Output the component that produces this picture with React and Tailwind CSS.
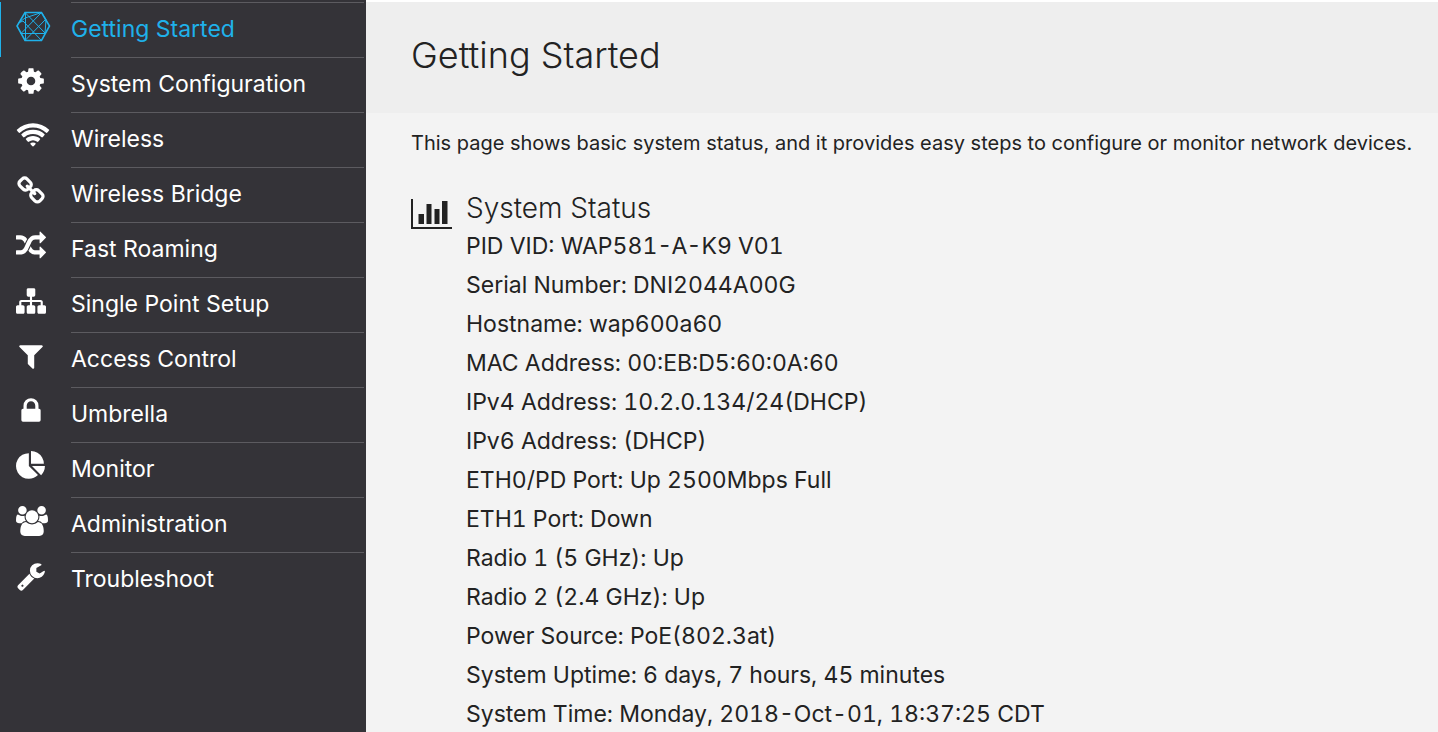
import React from 'react';

// Glyphs share a 1792 unit high grid, most of them are square
const icons = {
  cog: {
    d: 'M1152 896q0-106-75-181t-181-75-181 75-75 181 75 181 181 75 181-75 75-181zm512-109v222q0 12-8 23t-20 13l-185 28q-19 54-39 91 35 50 107 138 10 12 10 25t-9 23q-27 37-99 108t-94 71q-12 0-26-9l-138-108q-44 23-91 38-16 136-29 186-7 28-36 28h-222q-14 0-24.5-8.5t-11.5-21.5l-28-184q-49-16-90-37l-141 107q-10 9-25 9-14 0-25-11-126-114-165-168-7-10-7-23 0-12 8-23 15-21 51-66.5t54-70.5q-27-50-41-99l-183-27q-13-2-21-12.5t-8-23.5v-222q0-12 8-23t19-13l186-28q14-46 39-92-40-57-107-138-10-12-10-24 0-10 9-23 26-36 98.5-107.5t94.5-71.5q13 0 26 10l138 107q44-23 91-38 16-136 29-186 7-28 36-28h222q14 0 24.5 8.5t11.5 21.5l28 184q49 16 90 37l142-107q9-9 24-9 13 0 25 10 129 119 165 170 7 8 7 22 0 12-8 23-15 21-51 66.5t-54 70.5q26 50 41 98l183 28q13 2 21 12.5t8 23.5z',
  },
  wifi: {
    viewBox: '-128 0 2048 1792',
    size: 'w-[34px] h-[30px]',
    d: 'M896 1523q-20 0-93-73.5t-73-93.5q0-32 62.5-54t103.5-22 103.5 22 62.5 54q0 20-73 93.5t-93 73.5zm270-271q-2 0-40-25t-101.5-50-128.5-25-128.5 25-101 50-40.5 25q-18 0-93.5-75t-75.5-93q0-13 10-23 78-77 196-121t233-44 233 44 196 121q10 10 10 23 0 18-75.5 93t-93.5 75zm273-272q-11 0-23-8-136-105-252-154.5t-268-49.5q-85 0-170.5 22t-149 53-113.5 62-79 53-31 22q-17 0-92-75t-75-93q0-12 10-22 132-132 320-205t380-73 380 73 320 205q10 10 10 22 0 18-75 93t-92 75zm271-271q-11 0-22-9-179-157-371.5-236.5t-420.5-79.5-420.5 79.5-371.5 236.5q-11 9-22 9-17 0-92.5-75t-75.5-93q0-13 10-23 187-186 445-288t527-102 527 102 445 288q10 10 10 23 0 18-75.5 93t-92.5 75z',
  },
  chain: {
    d: 'M1520 1216q0-40-28-68l-208-208q-28-28-68-28-42 0-72 32 3 3 19 18.5t21.5 21.5 15 19 13 25.5 3.5 27.5q0 40-28 68t-68 28q-15 0-27.5-3.5t-25.5-13-19-15-21.5-21.5-18.5-19q-33 31-33 73 0 40 28 68l206 207q27 27 68 27 40 0 68-26l147-146q28-28 28-67zm-703-705q0-40-28-68l-206-207q-28-28-68-28-39 0-68 27l-147 146q-28 28-28 67 0 40 28 68l208 208q27 27 68 27 42 0 72-31-3-3-19-18.5t-21.5-21.5-15-19-13-25.5-3.5-27.5q0-40 28-68t68-28q15 0 27.5 3.5t25.5 13 19 15 21.5 21.5 18.5 19q33-31 33-73zm895 705q0 120-85 203l-147 146q-83 83-203 83-121 0-204-85l-206-207q-83-83-83-203 0-123 88-209l-88-88q-86 88-208 88-120 0-204-84l-208-208q-84-84-84-204t85-203l147-146q83-83 203-83 121 0 204 85l206 207q83 83 83 203 0 123-88 209l88 88q86-88 208-88 120 0 204 84l208 208q84 84 84 204z',
  },
  random: {
    d: 'M666 481q-60 92-137 273-22-45-37-72.5t-40.5-63.5-51-56.5-63-35-81.5-14.5h-224q-14 0-23-9t-9-23v-192q0-14 9-23t23-9h224q250 0 410 225zm1126 799q0 14-9 23l-320 320q-9 9-23 9-13 0-22.5-9.5t-9.5-22.5v-192q-32 0-85 .5t-81 1-73-1-71-5-64-10.5-63-18.5-58-28.5-59-40-55-53.5-56-69.5q59-93 136-273 22 45 37 72.5t40.5 63.5 51 56.5 63 35 81.5 14.5h256v-192q0-14 9-23t23-9q12 0 24 10l319 319q9 9 9 23zm0-896q0 14-9 23l-320 320q-9 9-23 9-13 0-22.5-9.5t-9.5-22.5v-192h-256q-48 0-87 15t-69 45-51 61.5-45 77.5q-32 62-78 171-29 66-49.5 111t-54 105-64 100-74 83-90 68.5-106.5 42-128 16.5h-224q-14 0-23-9t-9-23v-192q0-14 9-23t23-9h224q48 0 87-15t69-45 51-61.5 45-77.5q32-62 78-171 29-66 49.5-111t54-105 64-100 74-83 90-68.5 106.5-42 128-16.5h256v-192q0-14 9-23t23-9q12 0 24 10l319 319q9 9 9 23z',
  },
  sitemap: {
    d: 'M1792 1248v320q0 40-28 68t-68 28h-320q-40 0-68-28t-28-68v-320q0-40 28-68t68-28h96v-192h-512v192h96q40 0 68 28t28 68v320q0 40-28 68t-68 28h-320q-40 0-68-28t-28-68v-320q0-40 28-68t68-28h96v-192h-512v192h96q40 0 68 28t28 68v320q0 40-28 68t-68 28h-320q-40 0-68-28t-28-68v-320q0-40 28-68t68-28h96v-192q0-52 38-90t90-38h512v-192h-96q-40 0-68-28t-28-68v-320q0-40 28-68t68-28h320q40 0 68 28t28 68v320q0 40-28 68t-68 28h-96v192h512q52 0 90 38t38 90v192h96q40 0 68 28t28 68z',
  },
  filter: {
    d: 'M1595 295q17 41-14 70l-493 493v742q0 42-39 59-13 5-25 5-27 0-45-19l-256-256q-19-19-19-45v-486l-493-493q-31-29-14-70 17-39 59-39h1280q42 0 59 39z',
  },
  lock: {
    d: 'M640 768h512v-192q0-106-75-181t-181-75-181 75-75 181v192zm832 96v576q0 40-28 68t-68 28h-960q-40 0-68-28t-28-68v-576q0-40 28-68t68-28h32v-192q0-184 132-316t316-132 316 132 132 316v192h32q40 0 68 28t28 68z',
  },
  pie: {
    d: 'M768 890l546 546q-106 108-247.5 168t-298.5 60q-209 0-385.5-103t-279.5-279.5-103-385.5 103-385.5 279.5-279.5 385.5-103v762zm187 6h773q0 157-60 298.5t-168 247.5zm709-128h-768v-768q209 0 385.5 103t279.5 279.5 103 385.5z',
  },
  users: {
    viewBox: '0 0 1920 1792',
    size: 'w-[32px] h-[30px]',
    d: 'M593 896q-162 5-265 128h-134q-82 0-138-40.5t-56-118.5q0-353 124-353 6 0 43.5 21t97.5 42.5 119 21.5q67 0 133-23-5 37-5 66 0 139 81 256zm1071 637q0 120-73 189.5t-194 69.5h-874q-121 0-194-69.5t-73-189.5q0-53 3.5-103.5t14-109 26.5-108.5 43-97.5 62-81 85.5-53.5 111.5-20q10 0 43 21.5t73 48 107 48 135 21.5 135-21.5 107-48 73-48 43-21.5q61 0 111.5 20t85.5 53.5 62 81 43 97.5 26.5 108.5 14 109 3.5 103.5zm-1024-1277q0 106-75 181t-181 75-181-75-75-181 75-181 181-75 181 75 75 181zm704 384q0 159-112.5 271.5t-271.5 112.5-271.5-112.5-112.5-271.5 112.5-271.5 271.5-112.5 271.5 112.5 112.5 271.5zm576 225q0 78-56 118.5t-138 40.5h-134q-103-123-265-128 81-117 81-256 0-29-5-66 66 23 133 23 59 0 119-21.5t97.5-42.5 43.5-21q124 0 124 353zm-128-609q0 106-75 181t-181 75-181-75-75-181 75-181 181-75 181 75 75 181z',
  },
  wrench: {
    d: 'M448 1472q0-26-19-45t-45-19-45 19-19 45 19 45 45 19 45-19 19-45zm644-420l-682 682q-37 37-90 37-52 0-91-37l-106-108q-38-36-38-90 0-53 38-91l681-681q39 98 114.5 173.5t173.5 114.5zm634-435q0 39-23 106-47 134-164.5 217.5t-258.5 83.5q-185 0-316.5-131.5t-131.5-316.5 131.5-316.5 316.5-131.5q58 0 121.5 16.5t107.5 46.5q16 11 16 28t-16 28l-293 169v224l193 107q5-3 79-48.5t135.5-81 70.5-35.5q15 0 23.5 10t8.5 25z',
  },
};

const menu = [
  { label: 'Getting Started', icon: 'hexagon', active: true },
  { label: 'System Configuration', icon: 'cog' },
  { label: 'Wireless', icon: 'wifi' },
  { label: 'Wireless Bridge', icon: 'chain' },
  { label: 'Fast Roaming', icon: 'random' },
  { label: 'Single Point Setup', icon: 'sitemap' },
  { label: 'Access Control', icon: 'filter' },
  { label: 'Umbrella', icon: 'lock' },
  { label: 'Monitor', icon: 'pie' },
  { label: 'Administration', icon: 'users' },
  { label: 'Troubleshoot', icon: 'wrench' },
];

const status = [
  'PID VID: WAP581-A-K9 V01',
  'Serial Number: DNI2044A00G',
  'Hostname: wap600a60',
  'MAC Address: 00:EB:D5:60:0A:60',
  'IPv4 Address: 10.2.0.134/24(DHCP)',
  'IPv6 Address: (DHCP)',
  'ETH0/PD Port: Up 2500Mbps Full',
  'ETH1 Port: Down',
  'Radio 1 (5 GHz): Up',
  'Radio 2 (2.4 GHz): Up',
  'Power Source: PoE(802.3at)',
  'System Uptime: 6 days, 7 hours, 45 minutes',
  'System Time: Monday, 2018-Oct-01, 18:37:25 CDT',
];

const HexagonIcon = () => (
  <svg viewBox="1 1 36 32" className="w-9 h-8 shrink-0" fill="none" stroke="currentColor" aria-hidden="true">
    <path strokeWidth="1.6" d="M10 2.500h16.500L34.500 16l-8 14.500H10L2 16z" />
    <path
      strokeWidth="1"
      d="M10.500 2.500v28M10 2.500L30.500 23.500M26.500 2.500L6 23.500M5.500 23.500h25M3.500 13L10 8L26.500 2.500M3.500 13L8 11L26.500 30.500M10 30.500L30.500 9.500M26.500 2.500L31 9.500L30 23.500"
    />
  </svg>
);

const MenuIcon = ({ name }) => {
  if (name === 'hexagon') return <HexagonIcon />;
  const { d, viewBox = '0 0 1792 1792', size = 'w-[30px] h-[30px]' } = icons[name];

  return (
    <svg viewBox={viewBox} className={`${size} shrink-0`} fill="currentColor" aria-hidden="true">
      <path d={d} />
    </svg>
  );
};

const Sidebar = () => (
  <nav className="w-[366px] shrink-0 bg-[#343338] pt-[2px]">
    <ul>
      {menu.map(({ label, icon, active }) => (
        <li key={label}>
          <a
            href="#"
            className={
              active
                ? 'flex h-[55px] border-l border-[#1fb1ea] pr-[2px] text-[#1fb1ea]'
                : 'flex h-[55px] border-l border-transparent pr-[2px] text-white'
            }
          >
            <span className="w-[70px] shrink-0 pl-[15px] pt-[9px]">
              <MenuIcon name={icon} />
            </span>
            <span className="flex-1 border-t border-[#5c5b60] text-[23px] leading-[52px]">{label}</span>
          </a>
        </li>
      ))}
    </ul>
  </nav>
);

const App = () => {
  return (
    <div className="flex min-h-screen bg-[#f3f3f3] font-['Inter',sans-serif] text-[#222]">
      <Sidebar />

      <main className="min-w-0 flex-1 border-t-2 border-white">
        {/* Page title */}
        <header className="bg-[#eeeeee] px-[45px] pt-[30px] pb-[34px]">
          <h1 className="text-[36px] font-light leading-[47px]">Getting Started</h1>
        </header>

        <p className="whitespace-nowrap pl-[45px] pt-4 text-[20px] leading-[28px]">
          This page shows basic system status, and it provides easy steps to configure or monitor network devices.
        </p>

        {/* System status */}
        <section className="flex gap-[13px] pl-[45px] pt-8">
          <svg viewBox="0 0 42 32" className="mt-2 h-8 w-[42px] shrink-0" fill="#222" aria-hidden="true">
            <path d="M0 2h2v28h39v2.500H0zM7.500 17h5.500v10H7.500zM15.500 7h5v20h-5zM23.500 12h5v15h-5zM31 4h5.500v23H31z" />
          </svg>
          <div>
            <h2 className="text-[28px] font-light leading-[38px]">System Status</h2>
            <ul className="text-[23px] leading-[39px] tabular-nums">
              {status.map((line) => (
                <li key={line}>{line}</li>
              ))}
            </ul>
          </div>
        </section>
      </main>
    </div>
  );
};

export default App;
